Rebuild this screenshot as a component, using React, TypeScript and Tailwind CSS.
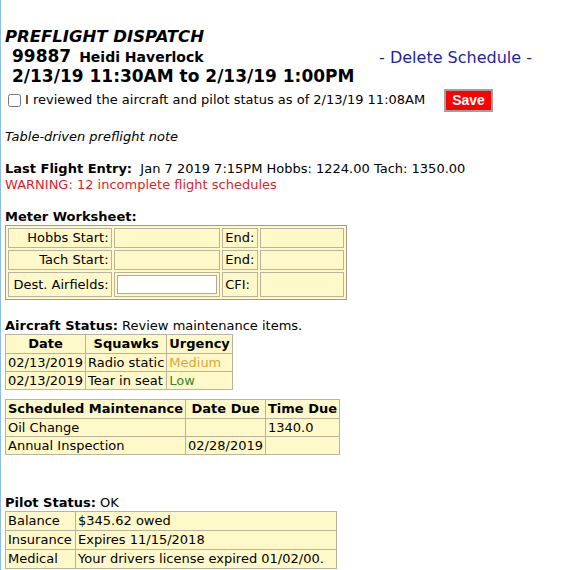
import React from 'react';

const cell = 'border border-[#b8b4a0] px-[2px]';

function MeterRow({ label, right, input }: { label: string; right: string; input?: boolean }) {
  return (
    <tr className={input ? 'h-[24px]' : 'h-[20px]'}>
      <td className={`${cell} text-right w-[103px]`}>{label}</td>
      <td className={`${cell} w-[106px] ${input ? 'p-[2px]' : ''}`}>
        {input && <div className="h-[19px] w-full bg-white border border-[#a9a9a9]" />}
      </td>
      <td className={`${cell} w-[35px]`}>{right}</td>
      <td className={`${cell} w-[84px]`}></td>
    </tr>
  );
}

export default function App() {
  return (
    <div
      className="min-h-[570px] bg-white border-l border-[#8cbde8] text-[13px] leading-[16px] text-black"
      style={{ fontFamily: '"DejaVu Sans", Verdana, sans-serif' }}
    >
      <div className="pt-[27px] pl-[4px]">
        <div className="text-[16.5px] leading-[20px] font-bold italic">PREFLIGHT DISPATCH</div>

        <div className="flex items-end justify-between pl-[7px] pr-[29px]">
          <div className="font-bold leading-[19px]">
            <span className="text-[17px]">99887</span>
            <span className="text-[14px] ml-[8px]">Heidi Haverlock</span>
          </div>
          <a className="text-[16px] leading-[19px] text-[#1e1ea6]">- Delete Schedule -</a>
        </div>
        <div className="pl-[7px] text-[17px] leading-[19px] font-bold">
          2/13/19 11:30AM to 2/13/19 1:00PM
        </div>

        <div className="flex items-center mt-[2px] h-[24px]">
          <input type="checkbox" className="ml-[3px] mr-[4px] w-[13px] h-[13px]" />
          <span>I reviewed the aircraft and pilot status as of 2/13/19 11:08AM</span>
          <button
            className="ml-[19px] h-[23px] px-[6px] bg-[#ff0000] text-white font-bold text-[14px] border-2 border-[#a0a0a0]"
            style={{ fontFamily: '"Liberation Sans", Arial, sans-serif' }}
          >
            Save
          </button>
        </div>

        <div className="italic mt-[17px]">Table-driven preflight note</div>

        <div className="mt-[16px]">
          <span className="font-bold">Last Flight Entry:</span>&nbsp; Jan 7 2019 7:15PM Hobbs: 1224.00 Tach: 1350.00
        </div>
        <div className="text-[#e3212b]">WARNING: 12 incomplete flight schedules</div>

        <div className="font-bold mt-[16px]">Meter Worksheet:</div>
        <table className="border border-[#a09c88] bg-[#fff9c9] border-separate border-spacing-[2px] w-[342px]">
          <tbody>
            <MeterRow label="Hobbs Start:" right="End:" />
            <MeterRow label="Tach Start:" right="End:" />
            <MeterRow label="Dest. Airfields:" right="CFI:" input />
          </tbody>
        </table>

        <div className="mt-[18px]">
          <span className="font-bold">Aircraft Status:</span> Review maintenance items.
        </div>
        <table className="border-collapse bg-[#fff9c9]">
          <tbody>
            <tr className="h-[19px] font-bold">
              <td className={`${cell} text-center`}>Date</td>
              <td className={`${cell} text-center`}>Squawks</td>
              <td className={`${cell}`}>Urgency</td>
            </tr>
            <tr className="h-[18px]">
              <td className={cell}>02/13/2019</td>
              <td className={cell}>Radio static</td>
              <td className={`${cell} text-[#e0a53a]`}>Medium</td>
            </tr>
            <tr className="h-[18px]">
              <td className={cell}>02/13/2019</td>
              <td className={cell}>Tear in seat</td>
              <td className={`${cell} text-[#2f8a2f]`}>Low</td>
            </tr>
          </tbody>
        </table>

        <table className="border-collapse bg-[#fff9c9] mt-[9px]">
          <tbody>
            <tr className="h-[19px] font-bold">
              <td className={cell}>Scheduled Maintenance</td>
              <td className={`${cell} text-center`}>Date Due</td>
              <td className={cell}>Time Due</td>
            </tr>
            <tr className="h-[18px]">
              <td className={cell}>Oil Change</td>
              <td className={cell}></td>
              <td className={cell}>1340.0</td>
            </tr>
            <tr className="h-[18px]">
              <td className={cell}>Annual Inspection</td>
              <td className={cell}>02/28/2019</td>
              <td className={cell}></td>
            </tr>
          </tbody>
        </table>

        <div className="mt-[40px]">
          <span className="font-bold">Pilot Status:</span> OK
        </div>
        <table className="border-collapse bg-[#fff9c9] w-[332px]">
          <tbody>
            <tr className="h-[19px]">
              <td className={`${cell} w-[70px]`}>Balance</td>
              <td className={cell}>$345.62 owed</td>
            </tr>
            <tr className="h-[19px]">
              <td className={cell}>Insurance</td>
              <td className={cell}>Expires 11/15/2018</td>
            </tr>
            <tr className="h-[19px]">
              <td className={cell}>Medical</td>
              <td className={cell}>Your drivers license expired 01/02/00.</td>
            </tr>
          </tbody>
        </table>
      </div>
    </div>
  );
}
